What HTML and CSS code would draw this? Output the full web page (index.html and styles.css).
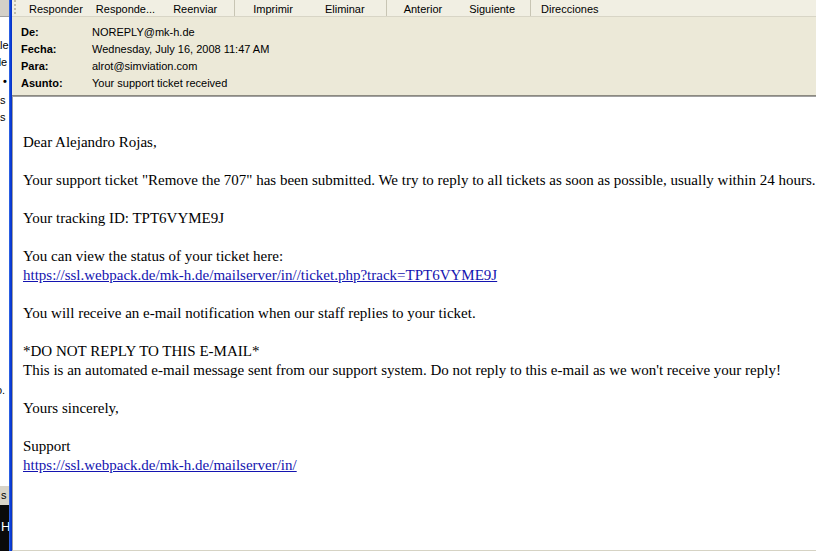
FILE: index.html
```html
<!DOCTYPE html>
<html>
<head>
<meta charset="utf-8">
<link rel="stylesheet" href="styles.css">
</head>
<body>
<div class="desktop">
  <div class="behind">
    <div class="bh-top"></div>
    <span class="frag f1">ale</span>
    <span class="frag f2">de</span>
    <span class="frag f3">•</span>
    <span class="frag f4">s</span>
    <span class="frag f5">s</span>
    <span class="frag f6">o.</span>
    <div class="bh-bar"><span>s</span></div>
    <div class="bh-dark"><span>H</span></div>
  </div>
  <div class="xp-border"></div>
  <div class="window">
    <div class="toolbar">
      <div class="grip"></div>
      <span class="btn b1">Responder</span>
      <span class="btn b2">Responde...</span>
      <span class="btn b3">Reenviar</span>
      <span class="sep s1"></span>
      <span class="btn b4">Imprimir</span>
      <span class="btn b5">Eliminar</span>
      <span class="sep s2"></span>
      <span class="btn b6">Anterior</span>
      <span class="btn b7">Siguiente</span>
      <span class="sep s3"></span>
      <span class="btn b8">Direcciones</span>
    </div>
    <div class="headers">
      <div class="hrow"><span class="lbl">De:</span><span class="val">NOREPLY@mk-h.de</span></div>
      <div class="hrow"><span class="lbl">Fecha:</span><span class="val">Wednesday, July 16, 2008 11:47 AM</span></div>
      <div class="hrow"><span class="lbl">Para:</span><span class="val">alrot@simviation.com</span></div>
      <div class="hrow"><span class="lbl">Asunto:</span><span class="val">Your support ticket received</span></div>
    </div>
    <div class="message">
      <p>Dear Alejandro Rojas,</p>
      <p>Your support ticket "Remove the 707" has been submitted. We try to reply to all tickets as soon as possible, usually within 24 hours.</p>
      <p>Your tracking ID: TPT6VYME9J</p>
      <p>You can view the status of your ticket here:<br><a href="#">https://ssl.webpack.de/mk-h.de/mailserver/in//ticket.php?track=TPT6VYME9J</a></p>
      <p>You will receive an e-mail notification when our staff replies to your ticket.</p>
      <p>*DO NOT REPLY TO THIS E-MAIL*<br>This is an automated e-mail message sent from our support system. Do not reply to this e-mail as we won't receive your reply!</p>
      <p>Yours sincerely,</p>
      <p>Support<br><a href="#">https://ssl.webpack.de/mk-h.de/mailserver/in/</a></p>
    </div>
  </div>
</div>
</body>
</html>
```
FILE: styles.css
```css
html, body {
  margin: 0;
  padding: 0;
  width: 816px;
  height: 551px;
  overflow: hidden;
  background: #ffffff;
}
.desktop {
  display: flex;
  width: 816px;
  height: 551px;
}
.behind {
  position: relative;
  width: 9px;
  flex: none;
  background: #ffffff;
  overflow: hidden;
  font-family: "Liberation Sans", Arial, sans-serif;
  font-size: 11px;
  color: #000;
}
.bh-top {
  height: 16px;
  background: #d4d0c8;
  border-bottom: 1px solid #a0a0a0;
}
.frag {
  position: absolute;
  line-height: 13px;
  white-space: nowrap;
}
.f1 { top: 39px; left: -6px; }
.f2 { top: 56px; left: -5px; }
.f3 { top: 75px; left: 3px; font-weight: bold; }
.f4 { top: 94px; left: 0px; }
.f5 { top: 111px; left: 0px; }
.f6 { top: 384px; left: -4px; }
.bh-bar {
  position: absolute;
  top: 485px;
  left: 0;
  width: 9px;
  height: 20px;
  background: #d8d4c8;
  border-top: 1px solid #ffffff;
  box-sizing: border-box;
}
.bh-bar span { position: absolute; left: 1px; top: 3px; }
.bh-dark {
  position: absolute;
  top: 505px;
  left: 0;
  width: 9px;
  height: 46px;
  background: #0a0a0a;
}
.bh-dark span { position: absolute; left: 1px; top: 14px; color: #fff; font-size: 13px; }
.xp-border {
  width: 3px;
  flex: none;
  background: linear-gradient(to right, #3a6ee8, #0a3fd8 50%, #0830c0);
}
.window {
  flex: 1;
  display: flex;
  flex-direction: column;
  min-width: 0;
  background: #ece9d8;
  font-family: "Liberation Sans", Tahoma, Arial, sans-serif;
  font-size: 11px;
  color: #000;
}
.toolbar {
  height: 17px;
  flex: none;
  display: flex;
  align-items: flex-start;
  background: #f1efe3;
  border-bottom: 1px solid #d8d5c6;
  box-sizing: border-box;
  white-space: nowrap;
}
.grip {
  width: 2px;
  height: 15px;
  margin-left: 2px;
  margin-right: 11px;
  background: repeating-linear-gradient(to bottom, #c1bdaa 0 2px, transparent 2px 4px);
}
.btn {
  line-height: 14px;
  padding-top: 2px;
}
.b1 { margin-left: 2px; }
.b2 { margin-left: 13px; }
.b3 { margin-left: 18px; }
.b5 { margin-left: 32px; }
.b7 { margin-left: 27px; }
.sep {
  width: 1px;
  height: 16px;
  background: #c8c5b4;
}
.s1 { margin-left: 17px; margin-right: 18px; }
.s2 { margin-left: 21px; margin-right: 17px; }
.s3 { margin-left: 15px; margin-right: 10px; }
.headers {
  height: 79px;
  flex: none;
  box-sizing: border-box;
  padding: 7px 0 0 9px;
  background: #ece9d8;
  border-bottom: 1px solid #8c8a80;
}
.hrow {
  display: flex;
  height: 17px;
  line-height: 17px;
}
.lbl {
  width: 71px;
  font-weight: bold;
}
.message {
  flex: 1;
  background: #ffffff;
  border-top: 1px solid #a0a0a0;
  border-left: 1px solid #a0a0a0;
  border-bottom: 1px solid #d6d3c4;
  padding: 36px 0 0 10px;
  font-family: "Liberation Serif", "Times New Roman", serif;
  font-size: 15px;
  line-height: 19px;
  white-space: nowrap;
  overflow: hidden;
}
.message p {
  margin: 0 0 19px 0;
}
.message a {
  color: #1414b0;
  text-decoration: underline;
}
```
